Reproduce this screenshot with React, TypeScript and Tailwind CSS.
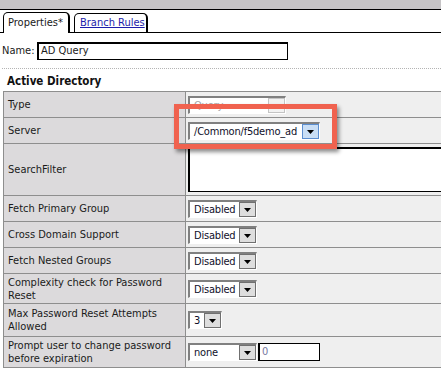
import React from "react";

type SelProps = {
  value: string;
  w: string;
  tone?: "normal" | "disabled" | "hover";
};

function Arrow({ color = "#000" }: { color?: string }) {
  return (
    <svg width="7" height="4" viewBox="0 0 7 4">
      <path d="M0 0h7L3.5 4z" fill={color} />
    </svg>
  );
}

// classic win-style combo box
function Sel({ value, w, tone = "normal" }: SelProps) {
  const btn =
    tone === "hover"
      ? "border-[#5b8ed0] bg-[#c9def5]"
      : tone === "disabled"
      ? "border-[#c4c4c4] bg-[#f2f2f2]"
      : "border-[#707070] bg-[#dedede]";
  return (
    <div
      className={`flex h-[18px] ${w} border-t-2 border-l-2 border-t-[#808080] border-l-[#808080] border-b border-r border-b-white border-r-white bg-white`}
    >
      <span
        className={`flex-1 overflow-hidden whitespace-nowrap pl-1 text-[11px] leading-[15px] tracking-[-0.2px] ${
          tone === "disabled" ? "text-[#a8a8a8]" : "text-[#10102a]"
        }`}
      >
        {value}
      </span>
      <span className={`flex h-[15px] w-[17px] items-end justify-center border pb-[4px] ${btn}`}>
        {tone !== "disabled" && <Arrow />}
      </span>
    </div>
  );
}

type Row = { label: React.ReactNode; h: string; cell: React.ReactNode };

const ROWS: Row[] = [
  { label: "Type", h: "h-[26px]", cell: <Sel value="Query" w="w-[98px]" tone="disabled" /> },
  { label: "Server", h: "h-[26px]", cell: <Sel value="/Common/f5demo_ad" w="w-[132px]" tone="hover" /> },
  {
    label: "SearchFilter",
    h: "h-[52px]",
    cell: <div className="h-[45px] w-full border border-black border-t-2 border-l-2 bg-white" />,
  },
  { label: "Fetch Primary Group", h: "h-[26px]", cell: <Sel value="Disabled" w="w-[69px]" /> },
  { label: "Cross Domain Support", h: "h-[26px]", cell: <Sel value="Disabled" w="w-[69px]" /> },
  { label: "Fetch Nested Groups", h: "h-[26px]", cell: <Sel value="Disabled" w="w-[69px]" /> },
  { label: "Complexity check for Password Reset", h: "h-[30px]", cell: <Sel value="Disabled" w="w-[69px]" /> },
  { label: "Max Password Reset Attempts Allowed", h: "h-[33px]", cell: <Sel value="3" w="w-[34px]" /> },
  {
    label: "Prompt user to change password before expiration",
    h: "h-[31px]",
    cell: (
      <div className="flex items-center">
        <Sel value="none" w="w-[69px]" />
        <div className="ml-[1px] h-[18px] w-[62px] border border-black border-l-2 bg-white pl-[2px] text-[11px] leading-[15px] text-[#7878a0]">
          0
        </div>
      </div>
    ),
  },
];

export default function App() {
  return (
    <div
      className="relative h-[382px] w-[441px] overflow-hidden bg-white text-[11px] text-[#1a1a1a]"
      style={{ fontFamily: '"DejaVu Sans Condensed", "DejaVu Sans", sans-serif' }}
    >
      {/* window strip */}
      <div className="h-[10px] border-b border-black bg-[#c6c4c6]" />

      {/* tabs */}
      <div className="flex h-[23px] items-end gap-[4px] border-b border-black pl-[3px]">
        <div className="-mb-[1px] flex h-[21px] w-[67px] items-center whitespace-nowrap rounded-t-[5px] border border-b-0 border-black border-r-2 bg-white pl-[4px] text-[11px]">
          Properties*
        </div>
        <div className="flex h-[19px] w-[74px] items-center whitespace-nowrap rounded-t-[5px] border border-b-0 border-black border-r-2 bg-white pl-[5px] text-[11px] text-[#1d1dab] underline">
          Branch Rules
        </div>
      </div>

      {/* name */}
      <div className="mt-[9px] flex items-center pl-[2px]">
        <span className="w-[35px]">Name:</span>
        <div className="h-[18px] w-[251px] border border-black border-t-2 border-l-2 pl-[2px] leading-[14px]">
          AD Query
        </div>
      </div>

      <div className="ml-[2px] mt-[8px] border-t border-dotted border-[#b4b4b4]" />

      <div className="mt-[5px] pl-[7px] text-[11.5px] font-bold leading-[14px] text-[#111]">Active Directory</div>

      <table className="ml-[3px] mt-[3px] w-[470px] border-collapse">
        <tbody>
          {ROWS.map((r, i) => (
            <tr key={i}>
              <td
                className={`${r.h} w-[182px] border border-[#8e8e8e] bg-[#dcdadc] pl-[4px] pr-[2px] align-middle leading-[13px]`}
              >
                {r.label}
              </td>
              <td className={`${r.h} border border-[#8e8e8e] bg-[#efefef] pl-[2px] align-middle`}>{r.cell}</td>
            </tr>
          ))}
        </tbody>
      </table>

      {/* highlight box drawn over the screenshot */}
      <div className="absolute left-[174px] top-[104px] h-[45px] w-[163px] border-[5px] border-[#f0624f] shadow-[2px_3px_4px_rgba(0,0,0,0.45)]" />
    </div>
  );
}
